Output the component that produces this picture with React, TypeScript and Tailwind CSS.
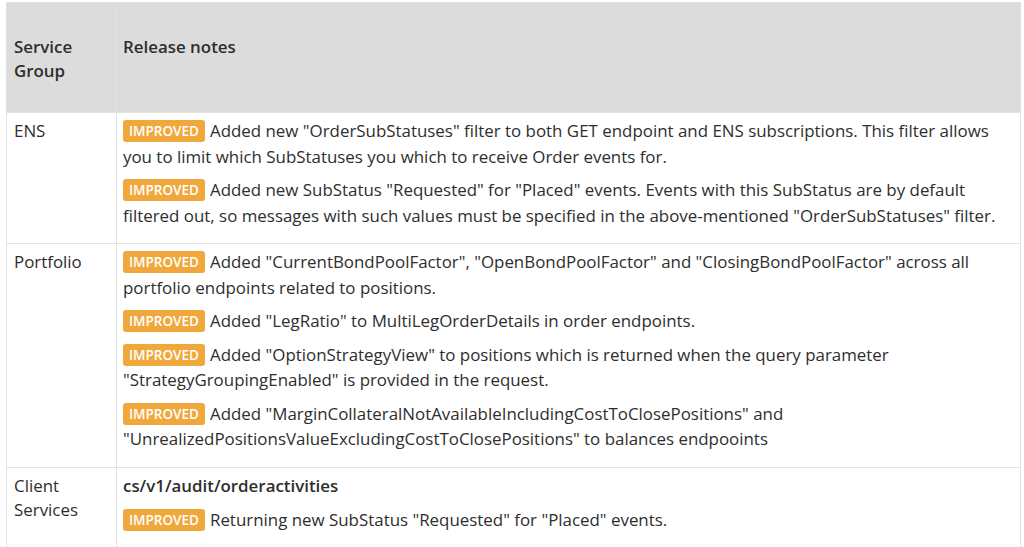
const ROWS = [
  {
    group: 'ENS',
    notes: [
      'Added new "OrderSubStatuses" filter to both GET endpoint and ENS subscriptions. This filter allows you to limit which SubStatuses you which to receive Order events for.',
      'Added new SubStatus "Requested" for "Placed" events. Events with this SubStatus are by default filtered out, so messages with such values must be specified in the above-mentioned "OrderSubStatuses" filter.',
    ],
  },
  {
    group: 'Portfolio',
    notes: [
      'Added "CurrentBondPoolFactor", "OpenBondPoolFactor" and "ClosingBondPoolFactor" across all portfolio endpoints related to positions.',
      'Added "LegRatio" to MultiLegOrderDetails in order endpoints.',
      'Added "OptionStrategyView" to positions which is returned when the query parameter "StrategyGroupingEnabled" is provided in the request.',
      'Added "MarginCollateralNotAvailableIncludingCostToClosePositions" and "UnrealizedPositionsValueExcludingCostToClosePositions" to balances endpooints',
    ],
  },
  {
    group: 'Client Services',
    heading: 'cs/v1/audit/orderactivities',
    notes: ['Returning new SubStatus "Requested" for "Placed" events.'],
  },
];

function Badge() {
  return (
    <span className="mr-[5px] inline-block rounded-[3px] bg-[#f0a83c] px-[6px] align-[1px] text-[13.5px] leading-[22px] font-semibold text-white">
      IMPROVED
    </span>
  );
}

export default function App() {
  return (
    <div className="min-h-[547px] bg-white pt-[2px] pl-[6px] pr-[3px] font-['Open_Sans',sans-serif] text-[16.9px] text-[#2e2e2e]">
      <table className="w-full border-collapse border border-[#e2e2e2]">
        <thead>
          <tr className="h-[110px] bg-[#dcdcdc]">
            <th className="w-[110px] border border-[#e2e2e2] px-[7px] pt-[32px] align-top text-left leading-[24px] font-semibold">
              Service Group
            </th>
            <th className="border border-[#e2e2e2] px-[6px] pt-[32px] align-top text-left leading-[24px] font-semibold">
              Release notes
            </th>
          </tr>
        </thead>
        <tbody>
          {ROWS.map((row) => (
            <tr key={row.group}>
              <td className="border border-[#e2e2e2] px-[7px] pt-[6px] pb-[7px] align-top leading-[24px]">
                {row.group}
              </td>
              <td className="border border-[#e2e2e2] pl-[6px] pr-[10px] pt-[5px] pb-[7px] align-top leading-[25.5px]">
                {row.heading && <p className="mb-[9px] font-semibold">{row.heading}</p>}
                {row.notes.map((note) => (
                  <p key={note} className="mb-[8px]">
                    <Badge />
                    {note}
                  </p>
                ))}
              </td>
            </tr>
          ))}
        </tbody>
      </table>
    </div>
  );
}
